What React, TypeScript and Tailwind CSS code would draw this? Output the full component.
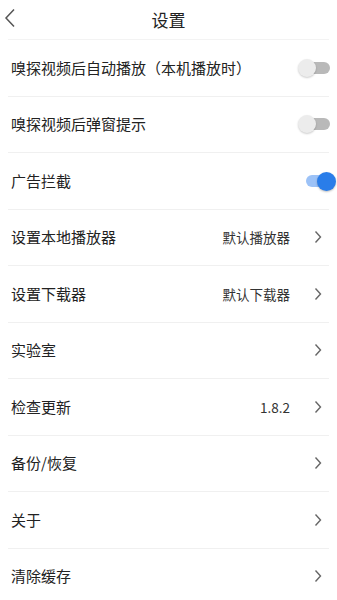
import { ReactNode } from "react";

const FONT = { fontFamily: '"Noto Sans CJK SC", "Noto Sans", sans-serif' };

function Toggle({ on }: { on: boolean }) {
  if (on) {
    return (
      <span className="relative flex h-[20px] w-[32px] items-center">
        <span className="ml-[2px] h-[12px] w-[26px] rounded-full bg-[#9cc2f7]" />
        <span className="absolute right-0 top-[1px] h-[19px] w-[19px] rounded-full bg-[#2a7de9] shadow-[0_1px_2px_rgba(0,0,0,0.25)]" />
      </span>
    );
  }
  return (
    <span className="relative flex h-[20px] w-[32px] items-center">
      <span className="ml-[4px] h-[12px] w-[28px] rounded-full bg-[#b9b9b9]" />
      <span className="absolute left-0 top-[1px] h-[18px] w-[18px] rounded-full bg-[#ececec] shadow-[0_1px_2px_rgba(0,0,0,0.2)]" />
    </span>
  );
}

function Chevron() {
  return (
    <svg width="8" height="14" viewBox="0 0 8 14" className="shrink-0">
      <path d="M1.5 1.5 L6.5 7 L1.5 12.5" fill="none" stroke="#666" strokeWidth="1.4" />
    </svg>
  );
}

function Row({ label, children }: { label: string; children?: ReactNode }) {
  return (
    <div className="mx-[8px] flex h-[56.5px] items-center justify-between border-b border-[#f0f0f0] pl-[3px]">
      <span className="text-[15px] text-[#222]">{label}</span>
      <div className="flex items-center">{children}</div>
    </div>
  );
}

function LinkRow({ label, value }: { label: string; value?: string }) {
  return (
    <Row label={label}>
      {value && <span className="mr-[24px] text-[13.5px] text-[#333]">{value}</span>}
      <span className="mr-[7px] flex">
        <Chevron />
      </span>
    </Row>
  );
}

export default function App() {
  return (
    <div className="h-[600px] w-[337px] overflow-hidden bg-white" style={FONT}>
      <div className="relative mx-[8px] flex h-[40px] items-center justify-center border-b border-[#f3f3f3]">
        <svg width="12" height="20" viewBox="0 0 12 20" className="absolute -left-[4px] top-[8px]">
          <path d="M10 1.5 L2 10 L10 18.5" fill="none" stroke="#555" strokeWidth="1.5" />
        </svg>
        <span className="text-[17px] text-[#222]">设置</span>
      </div>
      <Row label="嗅探视频后自动播放（本机播放时）">
        <span className="mr-[-1px]">
          <Toggle on={false} />
        </span>
      </Row>
      <Row label="嗅探视频后弹窗提示">
        <span className="mr-[-1px]">
          <Toggle on={false} />
        </span>
      </Row>
      <Row label="广告拦截">
        <span className="mr-[-7px]">
          <Toggle on={true} />
        </span>
      </Row>
      <LinkRow label="设置本地播放器" value="默认播放器" />
      <LinkRow label="设置下载器" value="默认下载器" />
      <LinkRow label="实验室" />
      <LinkRow label="检查更新" value="1.8.2" />
      <LinkRow label="备份/恢复" />
      <LinkRow label="关于" />
      <LinkRow label="清除缓存" />
    </div>
  );
}
